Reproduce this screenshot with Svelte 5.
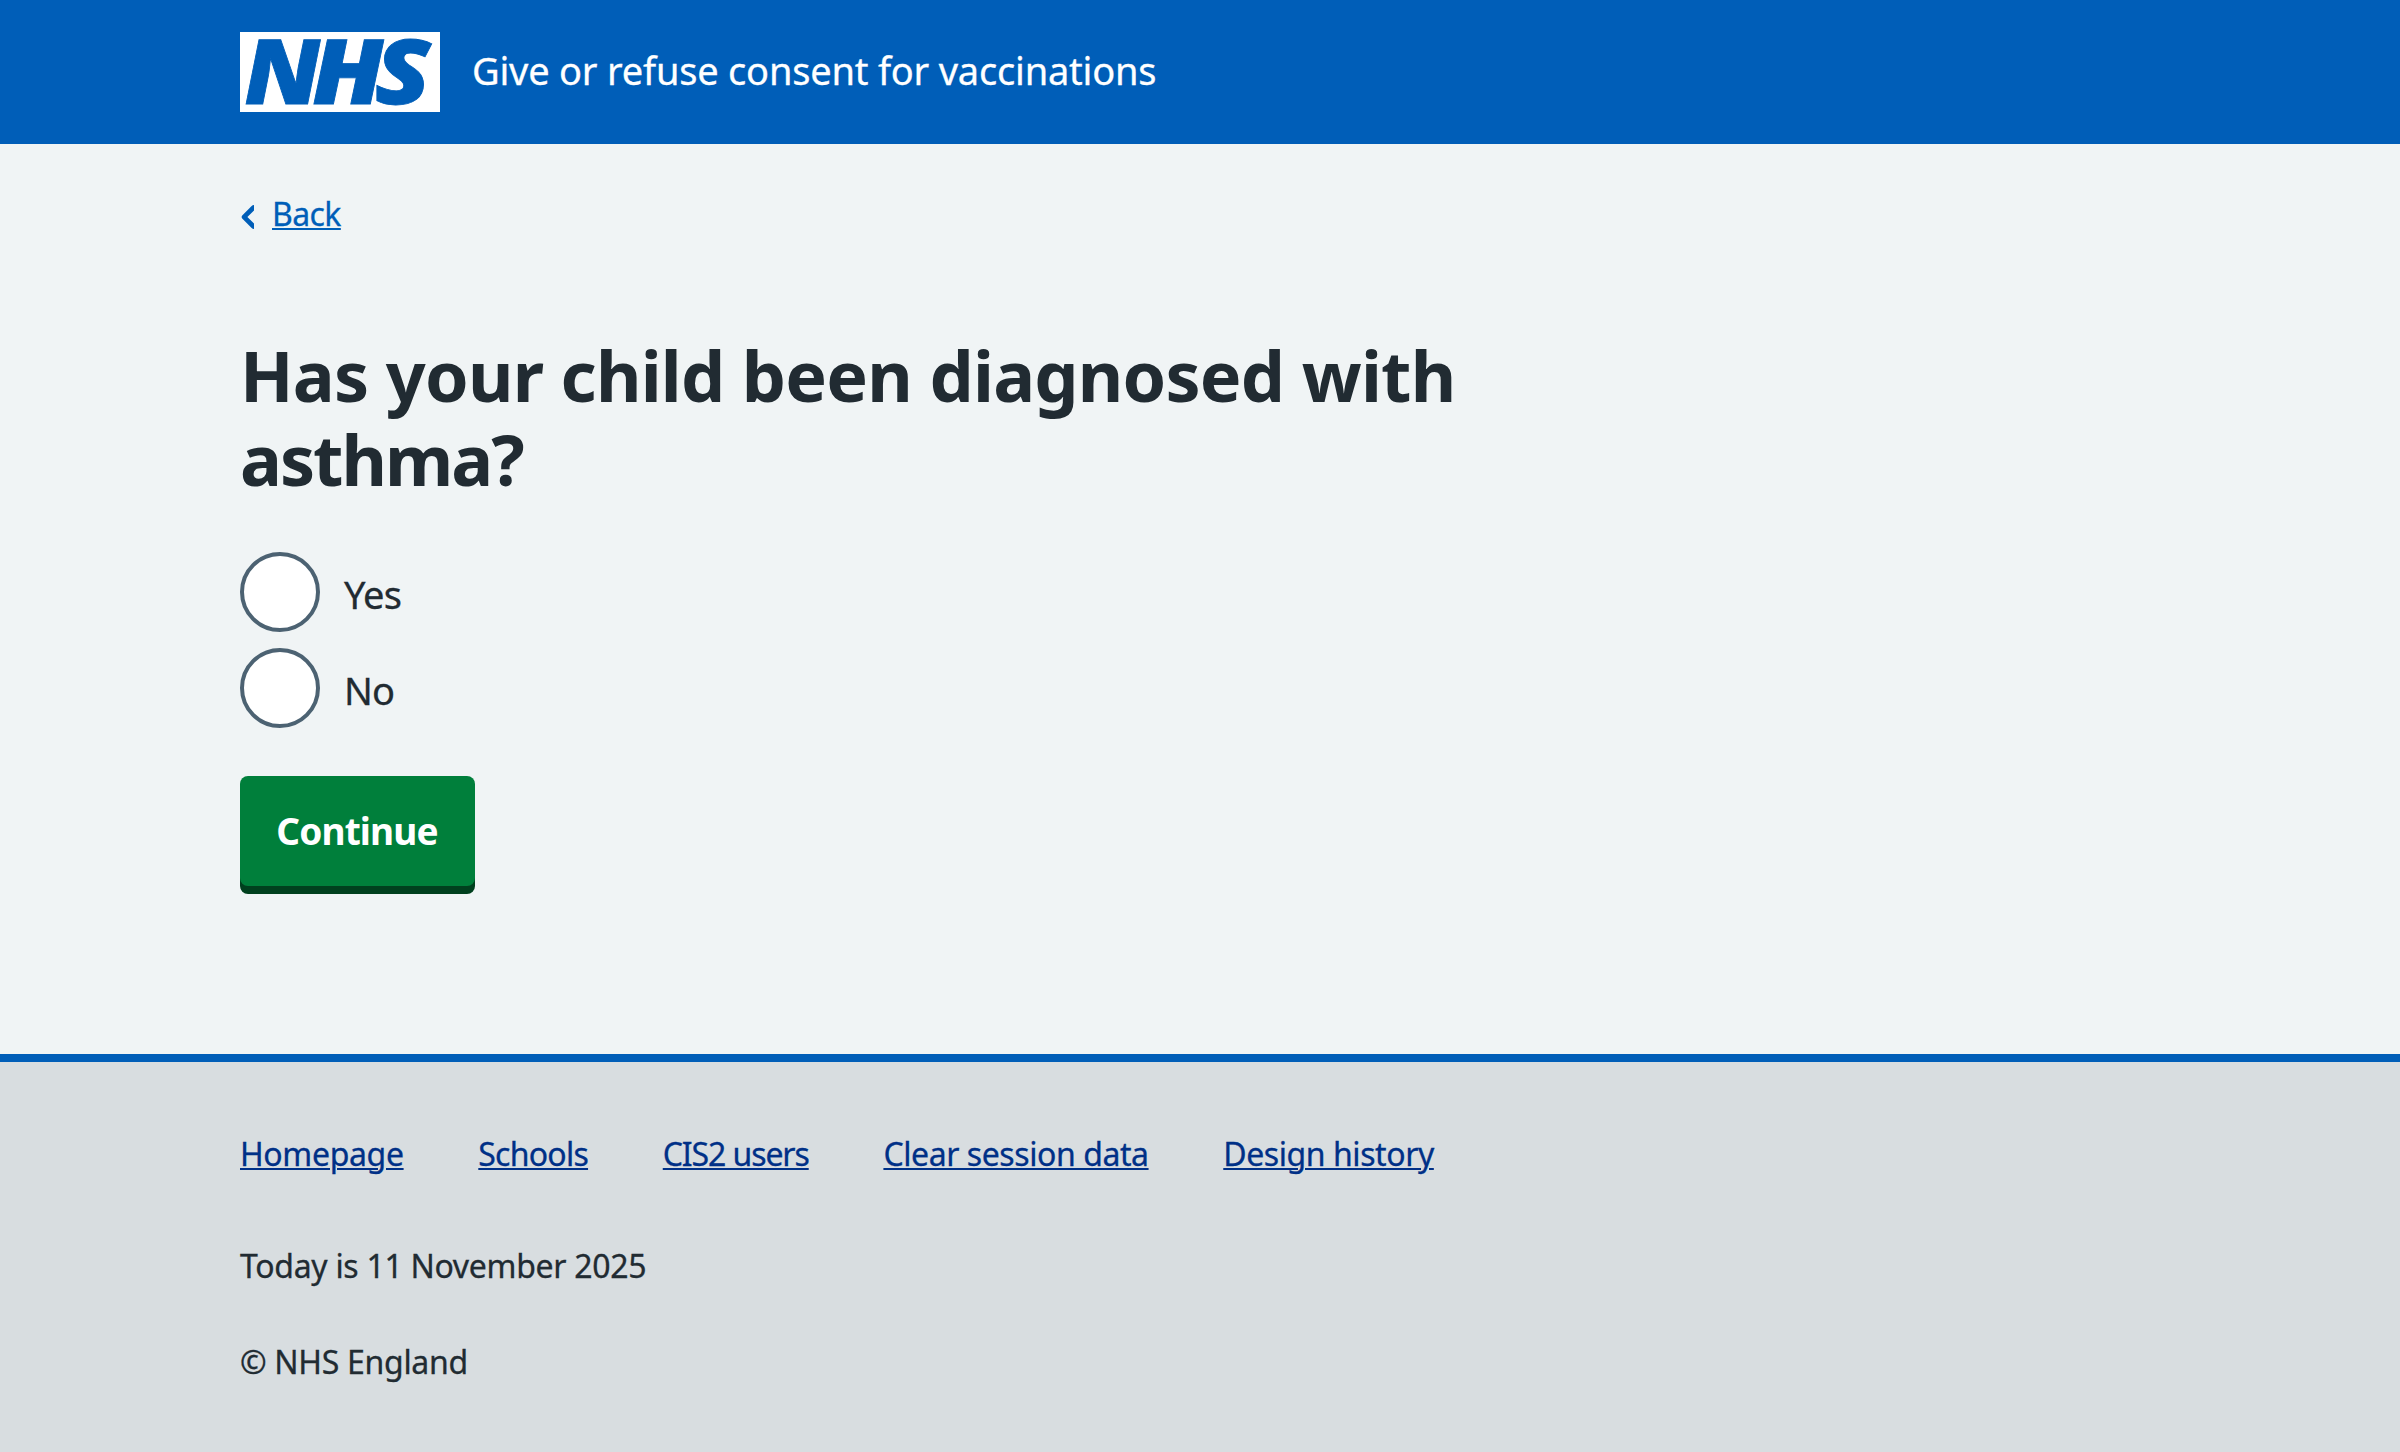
<script>
  const options = ['Yes', 'No'];
  const links = [
    { label: 'Homepage', cls: 'home' },
    { label: 'Schools', cls: 'schools' },
    { label: 'CIS2 users', cls: 'users' },
    { label: 'Clear session data', cls: 'clear' },
    { label: 'Design history', cls: 'history' }
  ];
  let answer = $state('');
</script>

<div class="page">
  <header>
    <svg class="logo" viewBox="0 0 200 80" width="200" height="80" role="img" aria-label="NHS">
      <rect width="200" height="80" fill="#fff" />
      <g class="mark">
        <text transform="translate(4.5 72.4) skewX(1.7)" textLength="77.4" lengthAdjust="spacingAndGlyphs">N</text>
        <text transform="translate(72.3 72.4) skewX(1.7)" textLength="73" lengthAdjust="spacingAndGlyphs">H</text>
        <text transform="translate(134.8 72.4)" textLength="56" lengthAdjust="spacingAndGlyphs">S</text>
      </g>
    </svg>
    <span class="service">Give or refuse consent for vaccinations</span>
  </header>

  <main>
    <a class="back" href="#back">
      <svg viewBox="0 0 14 24" width="14" height="24" aria-hidden="true">
        <path d="M14 0V5.6L7.4 12L14 18.4V24Q12.6 24 11.4 22.8L2.2 13.4Q0.8 12 2.2 10.6L11.4 1.2Q12.6 0 14 0Z" fill="currentColor" />
      </svg>
      <span>Back</span>
    </a>

    <form onsubmit={(e) => e.preventDefault()}>
      <h1>Has your child been diagnosed with <span class="last">asthma?</span></h1>
      <div class="radios">
        {#each options as option}
          <label class={option.toLowerCase()}>
            <input type="radio" name="asthma" value={option} bind:group={answer} />
            <span>{option}</span>
          </label>
        {/each}
      </div>
      <button type="submit">Continue</button>
    </form>
  </main>

  <footer>
    <nav>
      {#each links as link}
        <a class={link.cls} href="#{link.cls}">{link.label}</a>
      {/each}
    </nav>
    <p class="today">Today is 11 November 2025</p>
    <p class="copyright">© NHS England</p>
  </footer>
</div>

<style>
  :global(body) {
    margin: 0;
    background: #d8dde0;
  }

  .page {
    display: flex;
    flex-direction: column;
    min-height: 1452px;
    box-sizing: border-box;
    background: #f0f4f5;
    color: #212b32;
    font-family: 'Noto Sans', 'Open Sans', sans-serif;
    font-size: 32px;
    line-height: 48px;
    -webkit-text-stroke: 0.3px currentColor;
  }

  header {
    display: flex;
    align-items: center;
    gap: 32px;
    height: 144px;
    padding: 0 240px;
    box-sizing: border-box;
    background: #005eb8;
    color: #fff;
  }

  .logo {
    display: block;
    -webkit-text-stroke: 0;
  }

  .mark {
    fill: #005eb8;
    stroke: #005eb8;
    stroke-width: 0.8;
    font-family: 'Open Sans', 'Noto Sans', sans-serif;
    font-size: 90px;
    line-height: 1;
    font-weight: 800;
    font-style: italic;
  }

  .service {
    padding-bottom: 5px;
    font-size: 38px;
    letter-spacing: -0.2px;
  }

  main {
    height: 910px;
    padding: 46px 240px 0;
    box-sizing: border-box;
  }

  .back {
    display: flex;
    align-items: center;
    gap: 18px;
    width: fit-content;
    height: 48px;
    color: #005eb8;
    text-decoration: none;
  }

  .back svg {
    margin-top: 5px;
  }

  .back span {
    text-decoration: underline 2px;
    text-underline-offset: 2px;
    letter-spacing: -0.6px;
  }

  form {
    display: flex;
    flex-direction: column;
    align-items: flex-start;
    margin-top: 95px;
  }

  h1 {
    width: 1260px;
    margin: 0 0 51px;
    font-size: 70px;
    font-weight: 700;
    line-height: 84px;
    letter-spacing: -0.77px;
    -webkit-text-stroke: 0;
  }

  .last {
    letter-spacing: -2px;
  }

  .radios {
    display: flex;
    flex-direction: column;
    gap: 16px;
    margin-bottom: 48px;
  }

  label {
    display: flex;
    align-items: center;
    gap: 24px;
    height: 80px;
    font-size: 38px;
  }

  label span {
    padding-top: 3px;
  }

  .yes {
    letter-spacing: -0.7px;
  }

  .no {
    letter-spacing: -0.8px;
  }

  input {
    appearance: none;
    box-sizing: border-box;
    width: 80px;
    height: 80px;
    margin: 0;
    border: 4px solid #4c6272;
    border-radius: 50%;
    background: #fff;
  }

  input:checked {
    background: radial-gradient(circle, #212b32 20px, #fff 21px);
  }

  button {
    width: 235px;
    height: 110px;
    padding: 0 1px 1px 0;
    border: 0;
    border-radius: 8px;
    background: #007f3b;
    box-shadow: 0 8px 0 #00401e;
    color: #fff;
    font: 700 37px/56px 'Noto Sans', 'Open Sans', sans-serif;
    letter-spacing: -0.85px;
    -webkit-text-stroke: 0;
  }

  footer {
    flex: 1;
    padding: 68px 240px 0;
    border-top: 8px solid #005eb8;
    background: #d8dde0;
  }

  nav {
    display: flex;
    gap: 74.7px;
  }

  nav a {
    color: #003087;
    text-decoration: underline 2px;
    text-underline-offset: 2px;
    white-space: nowrap;
  }

  .home {
    letter-spacing: -0.35px;
  }

  .schools {
    letter-spacing: -0.75px;
  }

  .users {
    letter-spacing: -1.1px;
  }

  .clear,
  .history {
    letter-spacing: -0.43px;
  }

  p {
    margin: 0;
  }

  .today {
    margin-top: 64px;
    letter-spacing: -0.3px;
  }

  .copyright {
    margin-top: 48px;
    letter-spacing: -0.3px;
  }
</style>
